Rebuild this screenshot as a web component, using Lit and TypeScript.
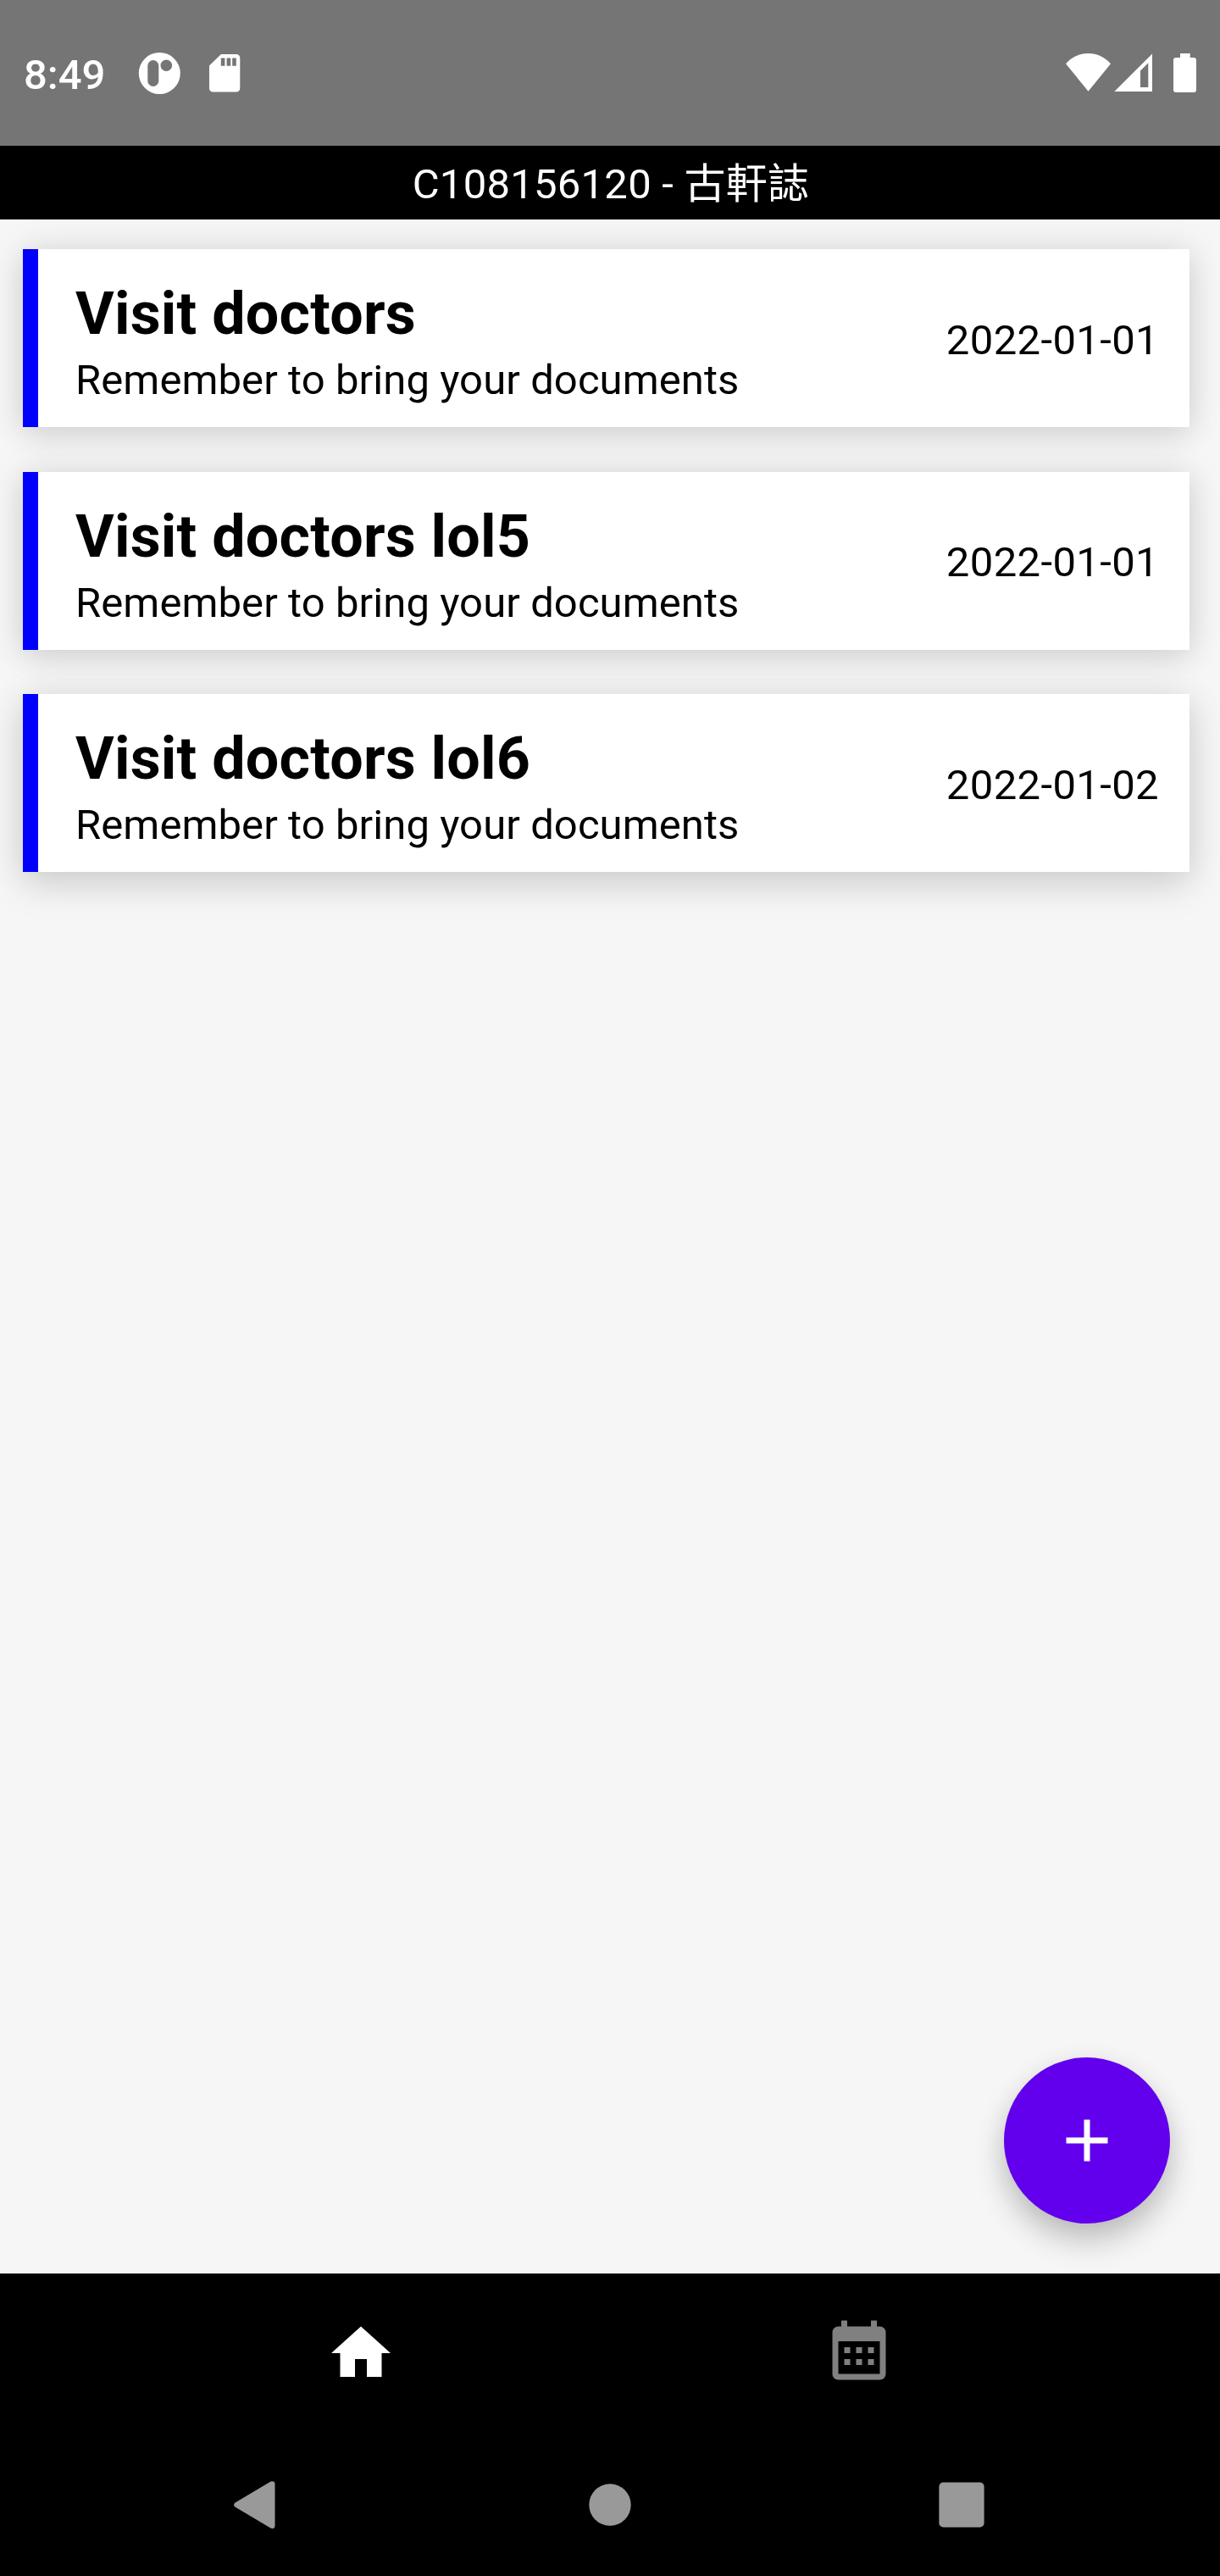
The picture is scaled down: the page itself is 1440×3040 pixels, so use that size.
import { LitElement, html, css } from "lit";
import { customElement, property } from "lit/decorators.js";

@customElement("status-bar")
class StatusBar extends LitElement {
  static styles = css`
    :host { display: flex; align-items: flex-start; justify-content: space-between; box-sizing: border-box;
      height: 172px; padding: 56px 28px 0 28px; background: #757575; color: #fff; }
    .side { display: flex; align-items: flex-start; height: 60px; }
    .time { font-size: 49px; line-height: 64px; font-weight: 500; width: 128px; white-space: nowrap; padding-top: 1px; }
    svg { display: block; height: 60px; fill: #fff; }
  `;
  render() {
    return html`
      <div class="side">
        <div class="time">8:49</div>
        <svg width="140" height="60" viewBox="156 56 140 60">
          <path fill-rule="evenodd" d="M188.3 62a24.5 24.5 0 1 0 0 49a24.5 24.5 0 1 0 0-49z M180.8 71a6.5 6.5 0 0 1 6.5 6.5v18a6.5 6.5 0 0 1-13 0v-18a6.5 6.5 0 0 1 6.5-6.5z M196.3 70.5a6.8 6.8 0 1 1 0 13.6a6.8 6.8 0 1 1 0-13.6z"/>
          <path fill-rule="evenodd" d="M261 64h18a4.3 4.3 0 0 1 4.3 4.3v36a4.3 4.3 0 0 1-4.3 4.3h-27.7a4.3 4.3 0 0 1-4.3-4.3V77.5z M260.8 68.5v9.3h4.6v-9.3z M267.6 68.5v9.3h4.6v-9.3z M274.2 68.5v9.3h4.6v-9.3z"/>
        </svg>
      </div>
      <svg width="162" height="60" viewBox="1250 56 162 60">
        <path d="M1284.5 107.7L1258 75.2C1265 67.5 1274 63 1284.500 63S1304 67.500 1311 75.200z"/>
        <path fill-rule="evenodd" d="M1315.300 108L1360 63.500V108z M1346 83.500V103h9.300V74.300z"/>
        <path d="M1393 63h11.700v5H1409a3 3 0 0 1 3 3v35a3 3 0 0 1-3 3h-21a3 3 0 0 1-3-3V71a3 3 0 0 1 3-3h5z"/>
      </svg>
    `;
  }
}

@customElement("reminder-card")
class ReminderCard extends LitElement {
  @property() heading = "";
  @property() note = "";
  @property() date = "";
  static styles = css`
    :host { display: flex; justify-content: space-between; align-items: center; box-sizing: border-box;
      height: 210px; padding: 0 36px 0 44px; background: #fff; border-left: 18px solid #00f; color: #000; }
    .text { display: flex; flex-direction: column; gap: 9px; padding-top: 9px; }
    .heading { font-size: 70px; line-height: 82px; font-weight: 700; white-space: nowrap; letter-spacing: 0.22px; }
    .note, .date { font-size: 49px; line-height: 58px; white-space: nowrap; letter-spacing: 0.08px; }
    .date { padding-top: 5px; letter-spacing: 0.38px; }
  `;
  render() {
    return html`
      <div class="text">
        <div class="heading">${this.heading}</div>
        <div class="note">${this.note}</div>
      </div>
      <div class="date">${this.date}</div>
    `;
  }
}

const reminders = [
  { heading: "Visit doctors", note: "Remember to bring your documents", date: "2022-01-01" },
  { heading: "Visit doctors lol5", note: "Remember to bring your documents", date: "2022-01-01" },
  { heading: "Visit doctors lol6", note: "Remember to bring your documents", date: "2022-01-02" },
];

@customElement("app-root")
class AppRoot extends LitElement {
  static styles = css`
    :host { display: flex; flex-direction: column; width: 1440px; height: 3040px; position: relative;
      background: #f6f6f6; font-family: Roboto, "Noto Sans CJK TC", sans-serif; overflow: hidden; }
    .title { box-sizing: border-box; height: 87px; padding: 4px 0 0 2px; background: #000; color: #fff; font-size: 49px;
      line-height: 83px; text-align: center; letter-spacing: 0.25px; }
    .list { flex: 1; min-height: 0; display: flex; flex-direction: column; gap: 52.5px; padding: 35px 36px 0 27px;
      isolation: isolate; overflow: hidden; }
    .item { position: relative; }
    .item::before { content: ""; position: absolute; inset: 0; z-index: -1;
      box-shadow: 0 10px 34px rgba(0, 0, 0, 0.1), 0 0 42px rgba(0, 0, 0, 0.09); }
    .item:last-child::before { box-shadow: 0 16px 42px rgba(0, 0, 0, 0.13), 0 0 40px rgba(0, 0, 0, 0.08); }
    .fab { position: absolute; left: 1185px; top: 2428px; width: 196px; height: 196px; border-radius: 50%;
      display: flex; align-items: center; justify-content: center; background: #6200ee;
      box-shadow: 0 20px 36px rgba(0, 0, 0, 0.22), 0 4px 30px rgba(0, 0, 0, 0.05); }
    .tabs { height: 189px; display: flex; justify-content: center; background: #000; }
    .tab { width: 588px; display: flex; justify-content: center; padding-top: 52px; }
    .system { height: 168px; background: #000; display: flex; justify-content: center; }
    .key { width: 415px; display: flex; justify-content: center; align-items: center; }
    svg { display: block; }
  `;
  render() {
    return html`
      <status-bar></status-bar>
      <div class="title">C108156120 - 古軒誌</div>
      <div class="list">
        ${reminders.map((r) => html`<div class="item">
          <reminder-card .heading=${r.heading} .note=${r.note} .date=${r.date}></reminder-card>
        </div>`)}
      </div>
      <div class="tabs">
        <div class="tab"><svg width="84" height="84" viewBox="0 0 24 24" fill="#fff"><path d="M10 20v-6h4v6h5v-8h3L12 3 2 12h3v8z"/></svg></div>
        <div class="tab"><svg width="84" height="84" viewBox="0 0 24 24" fill="#808080"><path d="M9,10V12H7V10H9M13,10V12H11V10H13M17,10V12H15V10H17M19,3A2,2 0 0,1 21,5V19A2,2 0 0,1 19,21H5C3.89,21 3,20.1 3,19V5A2,2 0 0,1 5,3H6V1H8V3H16V1H18V3H19M19,19V8H5V19H19M9,14V16H7V14H9M13,14V16H11V14H13M17,14V16H15V14H17Z"/></svg></div>
      </div>
      <div class="system">
        <div class="key"><svg width="60" height="60" viewBox="0 0 60 60" fill="#999"><path d="M2.500 27.500Q-.5 30 2.500 32.500L44.500 57.500Q49.500 59 49.500 54.500V5.500Q49.500 1 44.500 2.500z"/></svg></div>
        <div class="key"><svg width="60" height="60" viewBox="0 0 60 60" fill="#999"><circle cx="30" cy="30" r="24.700"/></svg></div>
        <div class="key"><svg width="60" height="60" viewBox="0 0 60 60" fill="#999"><rect x="3.400" y="3.500" width="53.200" height="53" rx="5"/></svg></div>
      </div>
      <div class="fab"><svg width="84" height="84" viewBox="0 0 24 24" fill="#fff"><path d="M19 13h-6v6h-2v-6H5v-2h6V5h2v6h6z"/></svg></div>
    `;
  }
}
